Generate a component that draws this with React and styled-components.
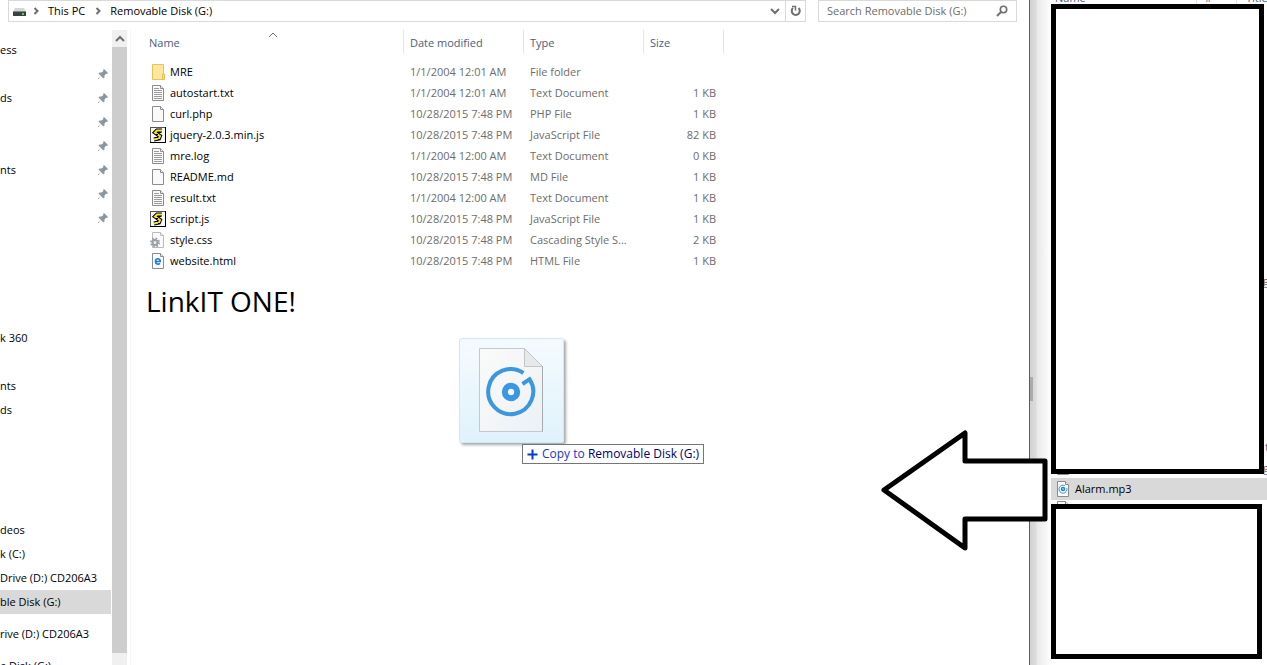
import React from "react";
import styled, { createGlobalStyle } from "styled-components";

const GlobalStyle = createGlobalStyle`
  * {
    box-sizing: border-box;
  }
  body {
    margin: 0;
    overflow: hidden;
    background: #ffffff;
    color: #000000;
    font-family: "Open Sans", "Noto Sans", sans-serif;
    font-size: 11px;
    line-height: 16px;
  }
  button, input {
    font: inherit;
    color: inherit;
    border: 0;
    padding: 0;
    background: none;
  }
`;

const Page = styled.div`
  position: relative;
  display: grid;
  grid-template-columns: minmax(0, 1fr) 21px 216px;
  height: 100vh;
  overflow: hidden;
`;

const Explorer = styled.main`
  display: flex;
  flex-direction: column;
  min-width: 0;
  min-height: 0;
  border-right: 1px solid #2f7d2b;
`;

const TopBar = styled.header`
  display: flex;
  gap: 12px;
  height: 22px;
  padding: 0 12px 0 8px;
`;

const AddressBar = styled.nav`
  display: flex;
  flex: 1;
  align-items: center;
  gap: 3px;
  border: 1px solid #d9d9d9;
  padding-left: 3px;
`;

const Crumb = styled.button`
  padding: 0 5px 0 4px;
`;

const BarButtons = styled.div`
  display: flex;
  margin-left: auto;
`;

const BarButton = styled.button`
  display: flex;
  align-items: center;
  justify-content: center;
  width: 20px;
  height: 20px;
  border-left: ${(p) => (p.$divided ? "1px solid #d9d9d9" : "0")};
`;

const SearchBox = styled.label`
  display: flex;
  align-items: center;
  width: 199px;
  border: 1px solid #d9d9d9;
  padding: 0 8px;
`;

const SearchInput = styled.input`
  flex: 1;
  min-width: 0;
  outline: none;
  &::placeholder {
    color: #6d6d6d;
    opacity: 1;
  }
`;

const Body = styled.div`
  display: grid;
  grid-template-columns: 111px 15px minmax(0, 1fr);
  column-gap: 1px;
  flex: 1;
  min-height: 0;
  padding-top: 8px;
`;

const Sidebar = styled.aside`
  display: flex;
  flex-direction: column;
  min-height: 0;
  overflow: hidden;
  padding-top: 8px;
`;

const Place = styled.a`
  display: flex;
  flex: none;
  align-items: center;
  justify-content: space-between;
  height: 24px;
  padding-right: 2px;
  margin-bottom: ${(p) => (p.$spaced ? "8px" : "0")};
  background: ${(p) => (p.$active ? "#d9d9d9" : "transparent")};
  color: #000000;
  text-decoration: none;
  white-space: nowrap;
`;

const ScrollTrack = styled.div`
  display: flex;
  flex-direction: column;
  min-height: 0;
  padding-bottom: 12px;
  background: #f0f0f0;
`;

const ScrollUp = styled.button`
  display: flex;
  align-items: center;
  justify-content: center;
  height: 17px;
`;

const ScrollThumb = styled.div`
  flex: 1;
  background: #cdcdcd;
`;

const Content = styled.section`
  margin-left: 2px;
  padding-left: 12px;
  border-left: 1px solid #f5f5f5;
`;

const FileTable = styled.table`
  width: 581px;
  table-layout: fixed;
  border-collapse: separate;
  border-spacing: 0;
`;

const HeadCell = styled.th`
  position: relative;
  width: ${(p) => p.$width}px;
  height: 24px;
  padding: 2px 6px 0;
  border-right: 1px solid #e5e5e5;
  color: #4c607a;
  font-weight: 400;
  text-align: left;
`;

const SortMark = styled.span`
  position: absolute;
  top: 0;
  left: 48%;
  display: flex;
`;

const FileCell = styled.td`
  height: 21px;
  padding: 0 8px 0 6px;
  color: #6d6d6d;
  text-align: ${(p) => (p.$right ? "right" : "left")};
  white-space: nowrap;
`;

const FileName = styled.div`
  display: flex;
  align-items: center;
  gap: 3px;
  padding-left: 1px;
  color: #000000;
`;

const FileRows = styled.tbody`
  &::before {
    content: "";
    display: table-row;
    height: 7px;
  }
`;

const Caption = styled.h1`
  margin: 12px 0 0 3px;
  font-size: 28px;
  line-height: 36px;
  font-weight: 400;
`;

const DragTile = styled.div`
  position: absolute;
  top: 338px;
  left: 459px;
  display: flex;
  align-items: center;
  justify-content: center;
  width: 105px;
  height: 105px;
  padding-bottom: 2px;
  border: 1px solid #cdeaf7;
  border-radius: 3px;
  background: linear-gradient(#f4fbfe, #e0f2fc);
  box-shadow: 2px 2px 3px rgba(0, 0, 0, 0.35);
`;

const DropTip = styled.div`
  position: absolute;
  top: 444px;
  left: 522px;
  display: flex;
  align-items: center;
  gap: 4px;
  height: 20px;
  padding: 0 4px;
  border: 1px solid #767676;
  background: #ffffff;
  color: #00006b;
  font-size: 12px;
  white-space: pre;
`;

const TipAction = styled.span`
  color: #1a35c9;
`;

const Gutter = styled.div`
  padding-top: 377px;
  background: linear-gradient(to right, #d2d2d2, #dcdcdc 6px, #e8e8e8 7px, #fdfdfd 20px);
`;

const GutterMark = styled.div`
  width: 3px;
  height: 24px;
  background: #ababab;
`;

const RightPane = styled.aside`
  position: relative;
  display: flex;
  flex-direction: column;
  overflow: hidden;
`;

const ClippedHead = styled.div`
  display: grid;
  grid-template-columns: 146px 40px 1fr;
  align-content: end;
  height: 4px;
  overflow: hidden;
  color: #4c607a;
`;

const ClippedLabel = styled.span`
  height: 14px;
  padding-left: ${(p) => p.$pad}px;
  border-right: 1px solid #e5e5e5;
`;

const CoverBox = styled.div`
  position: relative;
  flex: ${(p) => (p.$grow ? "1" : "none")};
  height: ${(p) => (p.$grow ? "auto" : "155px")};
  margin-right: ${(p) => p.$inset}px;
  margin-bottom: ${(p) => (p.$grow ? "0" : "6px")};
  border: 5px solid #000000;
  background: #ffffff;
`;

const SelectedFile = styled.div`
  display: flex;
  align-items: center;
  gap: 3px;
  height: 22px;
  margin: 4px 0;
  padding-left: 4px;
  background: #d9d9d9;
`;

const Sliver = styled.span`
  position: absolute;
  top: ${(p) => p.$top}px;
  right: -2px;
  color: #6d6d6d;
`;

const PeekIcon = styled.span`
  position: absolute;
  top: ${(p) => p.$top}px;
  left: 4px;
  display: flex;
`;

const Arrow = styled.svg`
  position: absolute;
  top: 426px;
  right: 216px;
`;

const Chevron = ({ d, width = 2, color = "#6f6f6f", size = 10 }) => (
  <svg width={size} height={size} viewBox="0 0 10 10" fill="none" stroke={color} strokeWidth={width}>
    <path d={d} />
  </svg>
);

const RIGHT = "M3.5 2L6.5 5L3.5 8";
const DOWN = "M1 3L5 7L9 3";
const UP = "M1 7L5 3L9 7";

const DriveIcon = () => (
  <svg width="16" height="16" viewBox="0 0 16 16">
    <path d="M3 5H12L14 9H1Z" fill="#d5d6d8" />
    <rect x="1" y="9" width="13" height="4" fill="#3c4042" />
    <rect x="1" y="8" width="13" height="1" fill="#85898b" />
    <rect x="10" y="10" width="2" height="2" fill="#43e04c" />
  </svg>
);

const RefreshIcon = () => (
  <svg width="12" height="12" viewBox="0 0 12 12" fill="none" stroke="#6f6f6f" strokeWidth="2">
    <path d="M3 3A4 4 0 1 0 8.5 3" />
    <path d="M2 1.5H5.5V5.5" strokeWidth="1.5" />
  </svg>
);

const SearchIcon = () => (
  <svg width="12" height="12" viewBox="0 0 12 12" fill="none" stroke="#6f6f6f" strokeWidth="1.6">
    <circle cx="7.5" cy="4.5" r="3.2" />
    <path d="M5 7L1 11" strokeWidth="2" />
  </svg>
);

const PinIcon = () => (
  <svg width="12" height="12" viewBox="0 0 12 12" fill="#8b979f">
    <path d="M7 1L11 5L10 6L9 5.8L7.5 7.5V9.5L6.5 10.5L4 8L1.5 11H1V10.5L4 8L1.5 5.5L2.5 4.5H4.5L6.5 3L6 2Z" />
  </svg>
);

const Sheet = ({ light }) => (
  <>
    <path
      d="M2.5 .5H10.5L13.5 3.5V15.5H2.5Z"
      fill="#fafafa"
      stroke={light ? "#bababa" : "#8c8c8c"}
    />
    <path d="M10.5 .5V3.5H13.5" fill="#ededed" stroke={light ? "#bababa" : "#8c8c8c"} />
  </>
);

const FileIcon = ({ kind }) => (
  <svg width="17" height="16" viewBox="0 0 17 16">
    {kind === "folder" && (
      <>
        <path d="M2.5 .5H13.5V15.5H2.5Z" fill="#ffe79b" stroke="#e9c25b" />
        <path d="M12.5 10H14.5V15.5H12.5Z" fill="#ffe17b" stroke="#e9be4e" />
      </>
    )}
    {kind === "text" && (
      <>
        <Sheet />
        <path d="M4 3.5H9M4 5.5H12M4 7.5H12M4 9.5H12M4 11.5H12M4 13.5H12" stroke="#9b9b9b" />
      </>
    )}
    {kind === "blank" && <Sheet />}
    {kind === "script" && (
      <>
        <rect x=".5" y=".5" width="15" height="15" fill="#f7f7f7" stroke="#555555" />
        <path d="M15.5 0V15.5H0" fill="none" stroke="#000000" />
        <path
          d="M12 3.5H7L5 5.5L10 9L9 11.5L4 12.5"
          fill="none"
          stroke="#000000"
          strokeWidth="4"
        />
        <path
          d="M12 3.5H7L5 5.5L10 9L9 11.5L4 12.5"
          fill="none"
          stroke="#f0e53a"
          strokeWidth="2"
        />
        <path d="M7 5.5H11M6 7.5H8M5 10.5H8M8 12.5H10" stroke="#000000" />
      </>
    )}
    {kind === "style" && (
      <>
        <Sheet light />
        <circle cx="5" cy="10.5" r="4" fill="none" stroke="#9a9fa3" strokeWidth="2" strokeDasharray="1.6 1.54" />
        <circle cx="5" cy="10.5" r="2.5" fill="#eeeeee" stroke="#9a9fa3" strokeWidth="2" />
      </>
    )}
    {kind === "html" && (
      <>
        <Sheet />
        <path d="M5.5 8.5H10.2C10.2 4.8 5.5 4.8 5.5 8.5C5.5 11.4 8.5 11.6 10 10.4" fill="none" stroke="#1683d8" strokeWidth="1.7" />
      </>
    )}
    {kind === "audio" && (
      <>
        <Sheet />
        <path d="M9.8 4.6A4 4 0 1 0 11.8 7" fill="none" stroke="#3a96dd" />
        <circle cx="8" cy="8" r="1.5" fill="#ffffff" stroke="#1683d8" strokeWidth="1.5" />
      </>
    )}
  </svg>
);

const AudioSheet = () => (
  <svg width="65" height="86" viewBox="0 0 65 86">
    <defs>
      <linearGradient id="paper" x1="0" y1="0" x2="1" y2="1">
        <stop offset="0" stopColor="#fafafa" />
        <stop offset="1" stopColor="#edf1f4" />
      </linearGradient>
    </defs>
    <path d="M.5 1.5H45.5L63.5 19.5V84.5H.5Z" fill="url(#paper)" stroke="#c3c9cc" />
    <path d="M45.5 1.5V19.5H63.5Z" fill="#e6e8ea" stroke="#c0c5c8" />
    <path d="M63.5 19.5V84.5" stroke="#a4aaad" />
    <path d="M44.4 26A22.5 22.5 0 1 0 50.5 32.2L43.5 37" fill="none" stroke="#3b97e0" strokeWidth="4" />
    <circle cx="32" cy="45" r="6.2" fill="#f5f7f9" stroke="#3b97e0" strokeWidth="6" />
  </svg>
);

const places = [
  { label: "ess" },
  { pinned: true },
  { label: "ds", pinned: true },
  { pinned: true },
  { pinned: true },
  { label: "nts", pinned: true },
  { pinned: true },
  { pinned: true },
  {},
  {},
  {},
  {},
  { label: "k 360" },
  {},
  { label: "nts" },
  { label: "ds" },
  {},
  {},
  {},
  {},
  { label: "deos" },
  { label: "k (C:)" },
  { label: "Drive (D:) CD206A3" },
  { label: "ble Disk (G:)", active: true, spaced: true },
  { label: "rive (D:) CD206A3", spaced: true },
  { label: "e Disk (G:)" },
];

const files = [
  { name: "MRE", date: "1/1/2004 12:01 AM", type: "File folder", size: "", kind: "folder" },
  { name: "autostart.txt", date: "1/1/2004 12:01 AM", type: "Text Document", size: "1 KB", kind: "text" },
  { name: "curl.php", date: "10/28/2015 7:48 PM", type: "PHP File", size: "1 KB", kind: "blank" },
  { name: "jquery-2.0.3.min.js", date: "10/28/2015 7:48 PM", type: "JavaScript File", size: "82 KB", kind: "script" },
  { name: "mre.log", date: "1/1/2004 12:00 AM", type: "Text Document", size: "0 KB", kind: "text" },
  { name: "README.md", date: "10/28/2015 7:48 PM", type: "MD File", size: "1 KB", kind: "blank" },
  { name: "result.txt", date: "1/1/2004 12:00 AM", type: "Text Document", size: "1 KB", kind: "text" },
  { name: "script.js", date: "10/28/2015 7:48 PM", type: "JavaScript File", size: "1 KB", kind: "script" },
  { name: "style.css", date: "10/28/2015 7:48 PM", type: "Cascading Style S...", size: "2 KB", kind: "style" },
  { name: "website.html", date: "10/28/2015 7:48 PM", type: "HTML File", size: "1 KB", kind: "html" },
];

export default function App() {
  return (
    <>
      <GlobalStyle />
      <Page>
        <Explorer>
          <TopBar>
            <AddressBar aria-label="Address">
              <DriveIcon />
              <Chevron d={RIGHT} />
              <Crumb>This PC</Crumb>
              <Chevron d={RIGHT} />
              <Crumb>Removable Disk (G:)</Crumb>
              <BarButtons>
                <BarButton aria-label="Previous locations">
                  <Chevron d={DOWN} />
                </BarButton>
                <BarButton $divided aria-label="Refresh">
                  <RefreshIcon />
                </BarButton>
              </BarButtons>
            </AddressBar>
            <SearchBox>
              <SearchInput aria-label="Search" placeholder="Search Removable Disk (G:)" />
              <SearchIcon />
            </SearchBox>
          </TopBar>
          <Body>
            <Sidebar>
              {places.map((place, i) => (
                <Place
                  key={i}
                  href="#"
                  $active={place.active}
                  $spaced={place.spaced}
                >
                  <span>{place.label}</span>
                  {place.pinned && <PinIcon />}
                </Place>
              ))}
            </Sidebar>
            <ScrollTrack>
              <ScrollUp aria-label="Scroll up">
                <Chevron d={UP} />
              </ScrollUp>
              <ScrollThumb />
            </ScrollTrack>
            <Content>
              <FileTable>
                <thead>
                  <tr>
                    <HeadCell $width={261}>
                      Name
                      <SortMark>
                        <Chevron d={UP} width={1} />
                      </SortMark>
                    </HeadCell>
                    <HeadCell $width={120}>Date modified</HeadCell>
                    <HeadCell $width={120}>Type</HeadCell>
                    <HeadCell $width={80}>Size</HeadCell>
                  </tr>
                </thead>
                <FileRows>
                  {files.map((file) => (
                    <tr key={file.name}>
                      <FileCell>
                        <FileName>
                          <FileIcon kind={file.kind} />
                          {file.name}
                        </FileName>
                      </FileCell>
                      <FileCell>{file.date}</FileCell>
                      <FileCell>{file.type}</FileCell>
                      <FileCell $right>{file.size}</FileCell>
                    </tr>
                  ))}
                </FileRows>
              </FileTable>
              <Caption>LinkIT ONE!</Caption>
            </Content>
          </Body>
        </Explorer>
        <Gutter>
          <GutterMark />
        </Gutter>
        <RightPane>
          <Sliver $top={273}>g</Sliver>
          <Sliver $top={439}>t</Sliver>
          <Sliver $top={460}>g</Sliver>
          <PeekIcon $top={459}>
            <FileIcon kind="blank" />
          </PeekIcon>
          <PeekIcon $top={501}>
            <FileIcon kind="blank" />
          </PeekIcon>
          <ClippedHead>
            <ClippedLabel $pad={4}>Name</ClippedLabel>
            <ClippedLabel $pad={8}>#</ClippedLabel>
            <ClippedLabel $pad={9}>Title</ClippedLabel>
          </ClippedHead>
          <CoverBox $grow $inset={3} />
          <SelectedFile>
            <FileIcon kind="audio" />
            Alarm.mp3
          </SelectedFile>
          <CoverBox $inset={5} />
        </RightPane>
        <DragTile>
          <AudioSheet />
        </DragTile>
        <DropTip>
          <svg width="11" height="11" viewBox="0 0 11 11" stroke="#0a3bc4" strokeWidth="2">
            <path d="M5.5 .5V10.5M.5 5.5H10.5" />
          </svg>
          <span>
            <TipAction>Copy to </TipAction>
            Removable Disk (G:)
          </span>
        </DropTip>
        <Arrow width="172" height="130" viewBox="0 0 172 130" fill="#ffffff" stroke="#000000" strokeWidth="5" strokeLinejoin="round">
          <path d="M5 64L86 7V35H166V93H86V122Z" />
        </Arrow>
      </Page>
    </>
  );
}
